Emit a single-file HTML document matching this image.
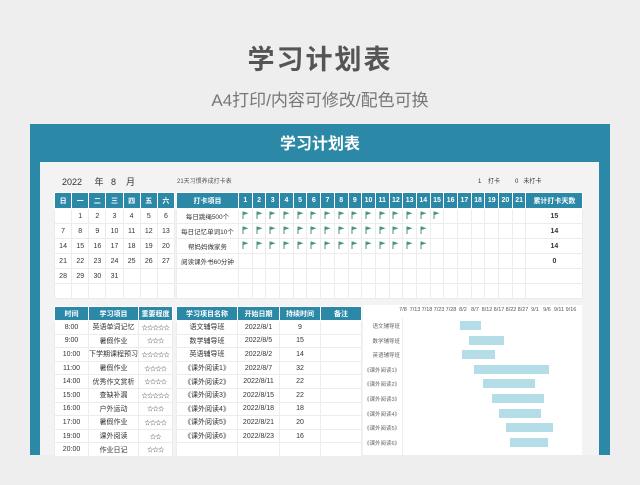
<!DOCTYPE html>
<html><head><meta charset="utf-8"><style>
*{margin:0;padding:0;box-sizing:border-box}
body{width:640px;height:485px;background:#eeeeee;position:relative;overflow:hidden;font-family:"Liberation Sans","Noto Sans CJK SC",sans-serif;color:#333}
.a{position:absolute}
table{border-collapse:collapse;table-layout:fixed;position:absolute;font-size:7px;text-align:center}
td,th{border:1px solid #ececec;overflow:hidden;white-space:nowrap;padding:0}
th{background:#2b88a7;color:#fff;font-weight:bold;border:1px solid #fff}
.w{background:#fff}
.bar{position:absolute;height:9px;background:#b4dde8}
.gl{position:absolute;left:362px;width:38px;text-align:right;font-size:5.5px;color:#666}
.ax{position:absolute;top:307px;width:20px;margin-left:-10px;text-align:center;font-size:5.5px;color:#555}
.st{font-size:6px;letter-spacing:-0.5px}
</style></head><body>
<div class="a" style="left:0;top:38px;width:640px;text-align:center;font-size:27px;font-weight:bold;color:#555;letter-spacing:2px">学习计划表</div>
<div class="a" style="left:0;top:86px;width:640px;text-align:center;font-size:17px;color:#777">A4打印/内容可修改/配色可换</div>
<div class="a" style="left:30px;top:124px;width:580px;height:331px;background:#2b88a7"></div>
<div class="a" style="left:30px;top:130px;width:580px;text-align:center;font-size:16px;font-weight:bold;color:#fff">学习计划表</div>
<div class="a" style="left:40px;top:162px;width:559px;height:293px;background:#f3f3f3"></div>
<div class="a" style="left:62px;top:175px;font-size:9px;color:#333">2022 &nbsp; &nbsp; 年 &nbsp; 8 &nbsp; &nbsp;月</div>
<div class="a" style="left:177px;top:176px;font-size:6px;color:#555">21天习惯养成打卡表</div>
<div class="a" style="left:478px;top:176px;font-size:6px;color:#333">1 &nbsp; &nbsp;打卡 &nbsp; &nbsp; &nbsp; &nbsp; 0 &nbsp; 未打卡</div>

<table style="left:54px;top:192px;width:121px" class="w">
<tr style="height:16px"><th>日</th><th>一</th><th>二</th><th>三</th><th>四</th><th>五</th><th>六</th></tr>
<tr style="height:15px"><td></td><td>1</td><td>2</td><td>3</td><td>4</td><td>5</td><td>6</td></tr>
<tr style="height:15px"><td>7</td><td>8</td><td>9</td><td>10</td><td>11</td><td>12</td><td>13</td></tr>
<tr style="height:15px"><td>14</td><td>15</td><td>16</td><td>17</td><td>18</td><td>19</td><td>20</td></tr>
<tr style="height:15px"><td>21</td><td>22</td><td>23</td><td>24</td><td>25</td><td>26</td><td>27</td></tr>
<tr style="height:15px"><td>28</td><td>29</td><td>30</td><td>31</td><td></td><td></td><td></td></tr>
<tr style="height:15px"><td></td><td></td><td></td><td></td><td></td><td></td><td></td></tr>
</table>

<table id="ck" style="left:176px;top:192px;width:407px" class="w">
<colgroup><col style="width:62px"><col span="21" style="width:13.7px"><col style="width:57px"></colgroup>
<tr style="height:16px"><th>打卡项目</th><th>1</th><th>2</th><th>3</th><th>4</th><th>5</th><th>6</th><th>7</th><th>8</th><th>9</th><th>10</th><th>11</th><th>12</th><th>13</th><th>14</th><th>15</th><th>16</th><th>17</th><th>18</th><th>19</th><th>20</th><th>21</th><th>累计打卡天数</th></tr>
</table>

<table style="left:54px;top:306px;width:118px" class="w">
<colgroup><col style="width:34px"><col style="width:50px"><col style="width:34px"></colgroup>
<tr style="height:14px"><th>时间</th><th>学习项目</th><th>重要程度</th></tr>
<tr style="height:13.6px"><td>8:00</td><td>英语单词记忆</td><td class="st">☆☆☆☆☆</td></tr>
<tr style="height:13.6px"><td>9:00</td><td>暑假作业</td><td class="st">☆☆☆</td></tr>
<tr style="height:13.6px"><td>10:00</td><td>下学期课程预习</td><td class="st">☆☆☆☆☆</td></tr>
<tr style="height:13.6px"><td>11:00</td><td>暑假作业</td><td class="st">☆☆☆☆</td></tr>
<tr style="height:13.6px"><td>14:00</td><td>优秀作文赏析</td><td class="st">☆☆☆☆</td></tr>
<tr style="height:13.6px"><td>15:00</td><td>查缺补漏</td><td class="st">☆☆☆☆☆</td></tr>
<tr style="height:13.6px"><td>16:00</td><td>户外运动</td><td class="st">☆☆☆</td></tr>
<tr style="height:13.6px"><td>17:00</td><td>暑假作业</td><td class="st">☆☆☆☆</td></tr>
<tr style="height:13.6px"><td>19:00</td><td>课外阅读</td><td class="st">☆☆</td></tr>
<tr style="height:13.6px"><td>20:00</td><td>作业日记</td><td class="st">☆☆☆</td></tr>
</table>

<table style="left:176px;top:306px;width:185px" class="w">
<colgroup><col style="width:61px"><col style="width:42px"><col style="width:41px"><col style="width:41px"></colgroup>
<tr style="height:14px"><th>学习项目名称</th><th>开始日期</th><th>持续时间</th><th>备注</th></tr>
<tr style="height:13.6px"><td>语文辅导班</td><td>2022/8/1</td><td>9</td><td></td></tr>
<tr style="height:13.6px"><td>数学辅导班</td><td>2022/8/5</td><td>15</td><td></td></tr>
<tr style="height:13.6px"><td>英语辅导班</td><td>2022/8/2</td><td>14</td><td></td></tr>
<tr style="height:13.6px"><td>《课外阅读1》</td><td>2022/8/7</td><td>32</td><td></td></tr>
<tr style="height:13.6px"><td>《课外阅读2》</td><td>2022/8/11</td><td>22</td><td></td></tr>
<tr style="height:13.6px"><td>《课外阅读3》</td><td>2022/8/15</td><td>22</td><td></td></tr>
<tr style="height:13.6px"><td>《课外阅读4》</td><td>2022/8/18</td><td>18</td><td></td></tr>
<tr style="height:13.6px"><td>《课外阅读5》</td><td>2022/8/21</td><td>20</td><td></td></tr>
<tr style="height:13.6px"><td>《课外阅读6》</td><td>2022/8/23</td><td>16</td><td></td></tr>
<tr style="height:13.6px"><td></td><td></td><td></td><td></td></tr>
</table>

<div class="a" style="left:363px;top:305px;width:219px;height:150px;background:#fff"></div>
<div class="a" style="left:402px;top:318px;width:1px;height:137px;background:#eee"></div>
<div id="g"></div>

<script>
var ck=document.getElementById('ck');
var names=['每日跳绳500个','每日记忆单词10个','帮妈妈做家务','阅读课外书60分钟','',''];
var cnt=[15,14,14,0,'',''];
var flag='<svg width="7" height="8" viewBox="0 0 7 8"><path d="M1 0.5V8" stroke="#5a8a80" stroke-width="1"/><path d="M1.5 0.5L6.5 2.2L1.5 4Z" fill="#3f9a86"/></svg>';
for(var r=0;r<6;r++){var tr=ck.insertRow();tr.style.height='15px';var h='<td style="font-size:6.5px">'+names[r]+'</td>';
for(var c=1;c<=21;c++){h+='<td>'+((r<3&&c<=cnt[r])?flag:'')+'</td>';}
h+='<td style="font-weight:bold">'+cnt[r]+'</td>';tr.innerHTML=h;}
var g=document.getElementById('g'),s='';
var ax=['7/8','7/13','7/18','7/23','7/28','8/2','8/7','8/12','8/17','8/22','8/27','9/1','9/6','9/11','9/16'];
for(var k=0;k<ax.length;k++){s+='<div class="ax" style="left:'+(403+k*12)+'px">'+ax[k]+'</div>';}
var ln=['语文辅导班','数学辅导班','英语辅导班','《课外阅读1》','《课外阅读2》','《课外阅读3》','《课外阅读4》','《课外阅读5》','《课外阅读6》'];
var st=[24,28,25,30,34,38,41,44,46],du=[9,15,14,32,22,22,18,20,16];
for(var i=0;i<9;i++){var y=321+i*14.6;
s+='<div class="gl" style="top:'+(y+1)+'px">'+ln[i]+'</div>';
s+='<div class="bar" style="top:'+y+'px;left:'+(405.3+st[i]*2.28)+'px;width:'+(du[i]*2.35)+'px"></div>';}
g.innerHTML=s;
</script>
</body></html>
